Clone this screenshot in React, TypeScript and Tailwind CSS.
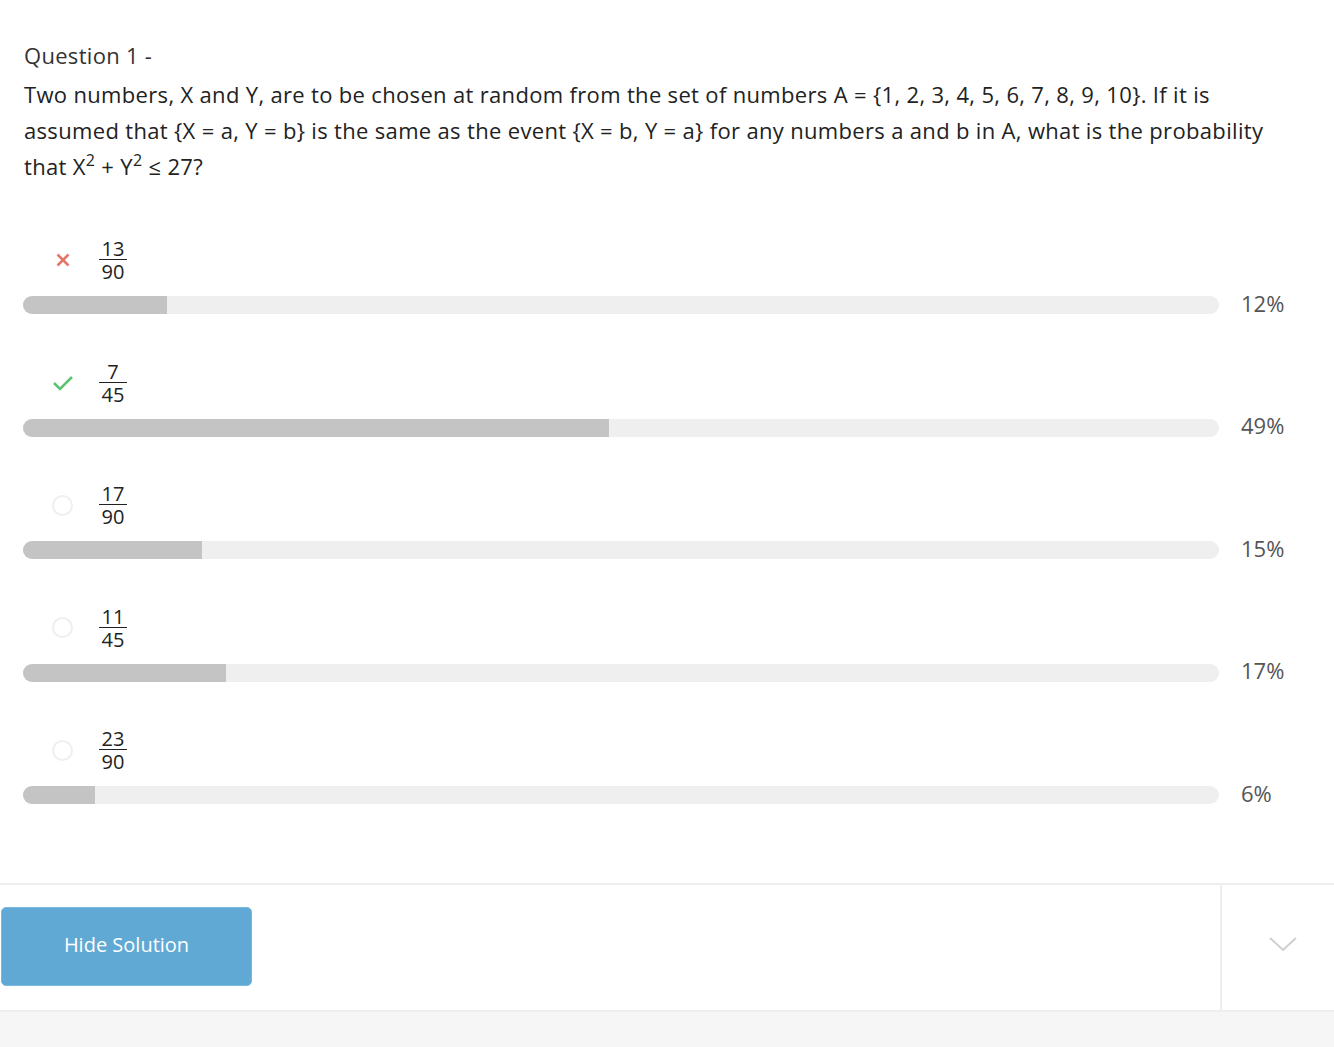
import React from "react";

type Opt = { num: string; den: string; pct: number; state: "wrong" | "right" | "none" };

const options: Opt[] = [
  { num: "13", den: "90", pct: 12, state: "wrong" },
  { num: "7", den: "45", pct: 49, state: "right" },
  { num: "17", den: "90", pct: 15, state: "none" },
  { num: "11", den: "45", pct: 17, state: "none" },
  { num: "23", den: "90", pct: 6, state: "none" },
];

function Icon({ state }: { state: Opt["state"] }) {
  if (state === "wrong")
    return (
      <svg width="16" height="16" viewBox="0 0 16 16">
        <path d="M2.5 2.5 L13.5 13.5 M13.5 2.5 L2.5 13.5" stroke="#e2786a" strokeWidth="2.6" strokeLinecap="butt" />
      </svg>
    );
  if (state === "right")
    return (
      <svg width="22" height="18" viewBox="0 0 22 18">
        <path d="M2 9 L8 15 L20 3" stroke="#5cc46f" strokeWidth="2.6" fill="none" />
      </svg>
    );
  return <div className="w-[21px] h-[21px] rounded-full border-2 border-[#efefef]" />;
}

export default function App() {
  return (
    <div className="w-[1334px] min-h-[1047px] bg-white text-[#222]" style={{ fontFamily: "'Open Sans', Lato, sans-serif" }}>
      <div className="px-6 pt-[40px]">
        <div className="text-[22px] leading-[30px] text-[#333] tracking-[0.3px]">Question 1 -</div>
        <div className="mt-[6px] text-[22px] leading-[36px] text-[#222] tracking-[0.33px]">
          <div className="whitespace-nowrap">Two numbers, X and Y, are to be chosen at random from the set of numbers A = {"{"}1, 2, 3, 4, 5, 6, 7, 8, 9, 10{"}"}. If it is</div>
          <div className="whitespace-nowrap">assumed that {"{"}X = a, Y = b{"}"} is the same as the event {"{"}X = b, Y = a{"}"} for any numbers a and b in A, what is the probability</div>
          <div className="whitespace-nowrap">
            that X<sup className="text-[16px] -top-[9px]">2</sup> + Y<sup className="text-[16px] -top-[9px]">2</sup> ≤ 27?
          </div>
        </div>
        <div className="mt-[53px] flex flex-col gap-[45.5px]">
          {options.map((o, i) => (
            <div key={i} className="flex flex-col">
              <div className="flex items-center h-[46px]">
                <div className="w-[76px] flex justify-center pl-[1px]">
                  <Icon state={o.state} />
                </div>
                <div className="flex flex-col items-center text-[20px] leading-[21px] text-[#222] -ml-[1px]">
                  <div className="px-[2px] border-b border-[#222] min-w-[28px] text-center">{o.num}</div>
                  <div className="pt-[1px] text-center">{o.den}</div>
                </div>
              </div>
              <div className="mt-[13px] flex items-center">
                <div className="w-[1196px] h-[18px] rounded-full bg-[#efefef] overflow-hidden -ml-[1px]">
                  <div className="h-full bg-[#c4c4c4]" style={{ width: `${o.pct}%` }} />
                </div>
                <div className="ml-[22px] text-[22px] leading-[18px] text-[#555] -mt-[5px]">{o.pct}%</div>
              </div>
            </div>
          ))}
        </div>
      </div>
      <div className="mt-[79px] border-t-2 border-[#eeeeee] border-b-2 flex h-[129px]">
        <div className="flex-1 flex items-center pl-[1px] pb-[2px]">
          <button className="w-[251px] h-[79px] rounded-[5px] bg-[#61a9d5] text-white text-[20px] border border-[#7ab8de] pb-[4px]">
            Hide Solution
          </button>
        </div>
        <div className="w-[114px] border-l-2 border-[#eeeeee] flex items-center pl-[46px] pb-[8px]">
          <svg width="30" height="16" viewBox="0 0 30 16">
            <path d="M2 2 L15 14 L28 2" stroke="#cfcfcf" strokeWidth="2" fill="none" />
          </svg>
        </div>
      </div>
      <div className="bg-[#f6f6f6] h-[36px]" />
    </div>
  );
}
